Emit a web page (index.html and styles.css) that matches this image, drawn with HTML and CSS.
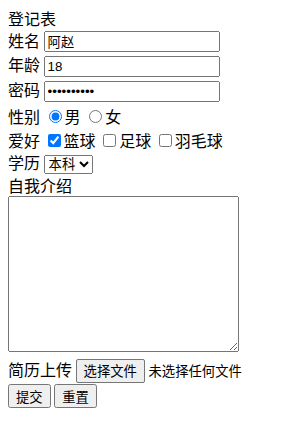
FILE: index.html
```
<!DOCTYPE html>
<html>
<head>
    <meta charset="utf-8">
    <title>登记表</title>
    <link rel="stylesheet" href="styles.css">
</head>
<body>
    <form class="reg">
        登记表<br>
        姓名 <input type="text" class="field" value="阿赵"><br>
        年龄 <input type="text" class="field" value="18"><br>
        密码 <input type="password" class="field" value="1234567890"><br>
        性别 <input type="radio" name="sex" checked>男 <input type="radio" name="sex">女<br>
        爱好 <input type="checkbox" checked>篮球 <input type="checkbox">足球 <input type="checkbox">羽毛球<br>
        学历 <select class="edu">
            <option>本科</option>
            <option>专科</option>
            <option>硕士</option>
        </select><br>
        自我介绍<br>
        <textarea class="intro"></textarea><br>
        简历上传 <label class="upload"><input type="file" class="hidden"><span class="pick">选择文件</span></label> <span class="tip">未选择任何文件</span><br>
        <input type="submit" class="btn" value="提交">
        <input type="reset" class="btn" value="重置">
    </form>
</body>
</html>
```

FILE: styles.css
```
body {
    font-family: "Noto Sans CJK SC", sans-serif;
    font-size: 16px;
    line-height: 21px;
}
input, select, textarea, button {
    font-family: "Liberation Sans", "Noto Sans CJK SC", sans-serif;
}
.field {
    width: 176px;
    height: 21px;
    box-sizing: border-box;
    margin: 2px 0;
}
input[type=radio], input[type=checkbox] {
    margin-top: 6px;
    margin-bottom: 5px;
}
.edu {
    margin: 3px 0 1px;
}
.intro {
    width: 231px;
    height: 156px;
    box-sizing: border-box;
    margin: 0 0 3px;
}
/* 文件上传按钮 */
.hidden {
    display: none;
}
.pick {
    display: inline-block;
    padding: 1px 7px;
    border: 1px solid #767676;
    border-radius: 2px;
    background-color: #efefef;
    font-size: 13.33px;
    line-height: 20px;
    color: #000;
}
.tip {
    font-size: 13.33px;
}
.btn {
    height: 24px;
    margin-top: 1px;
}
```
